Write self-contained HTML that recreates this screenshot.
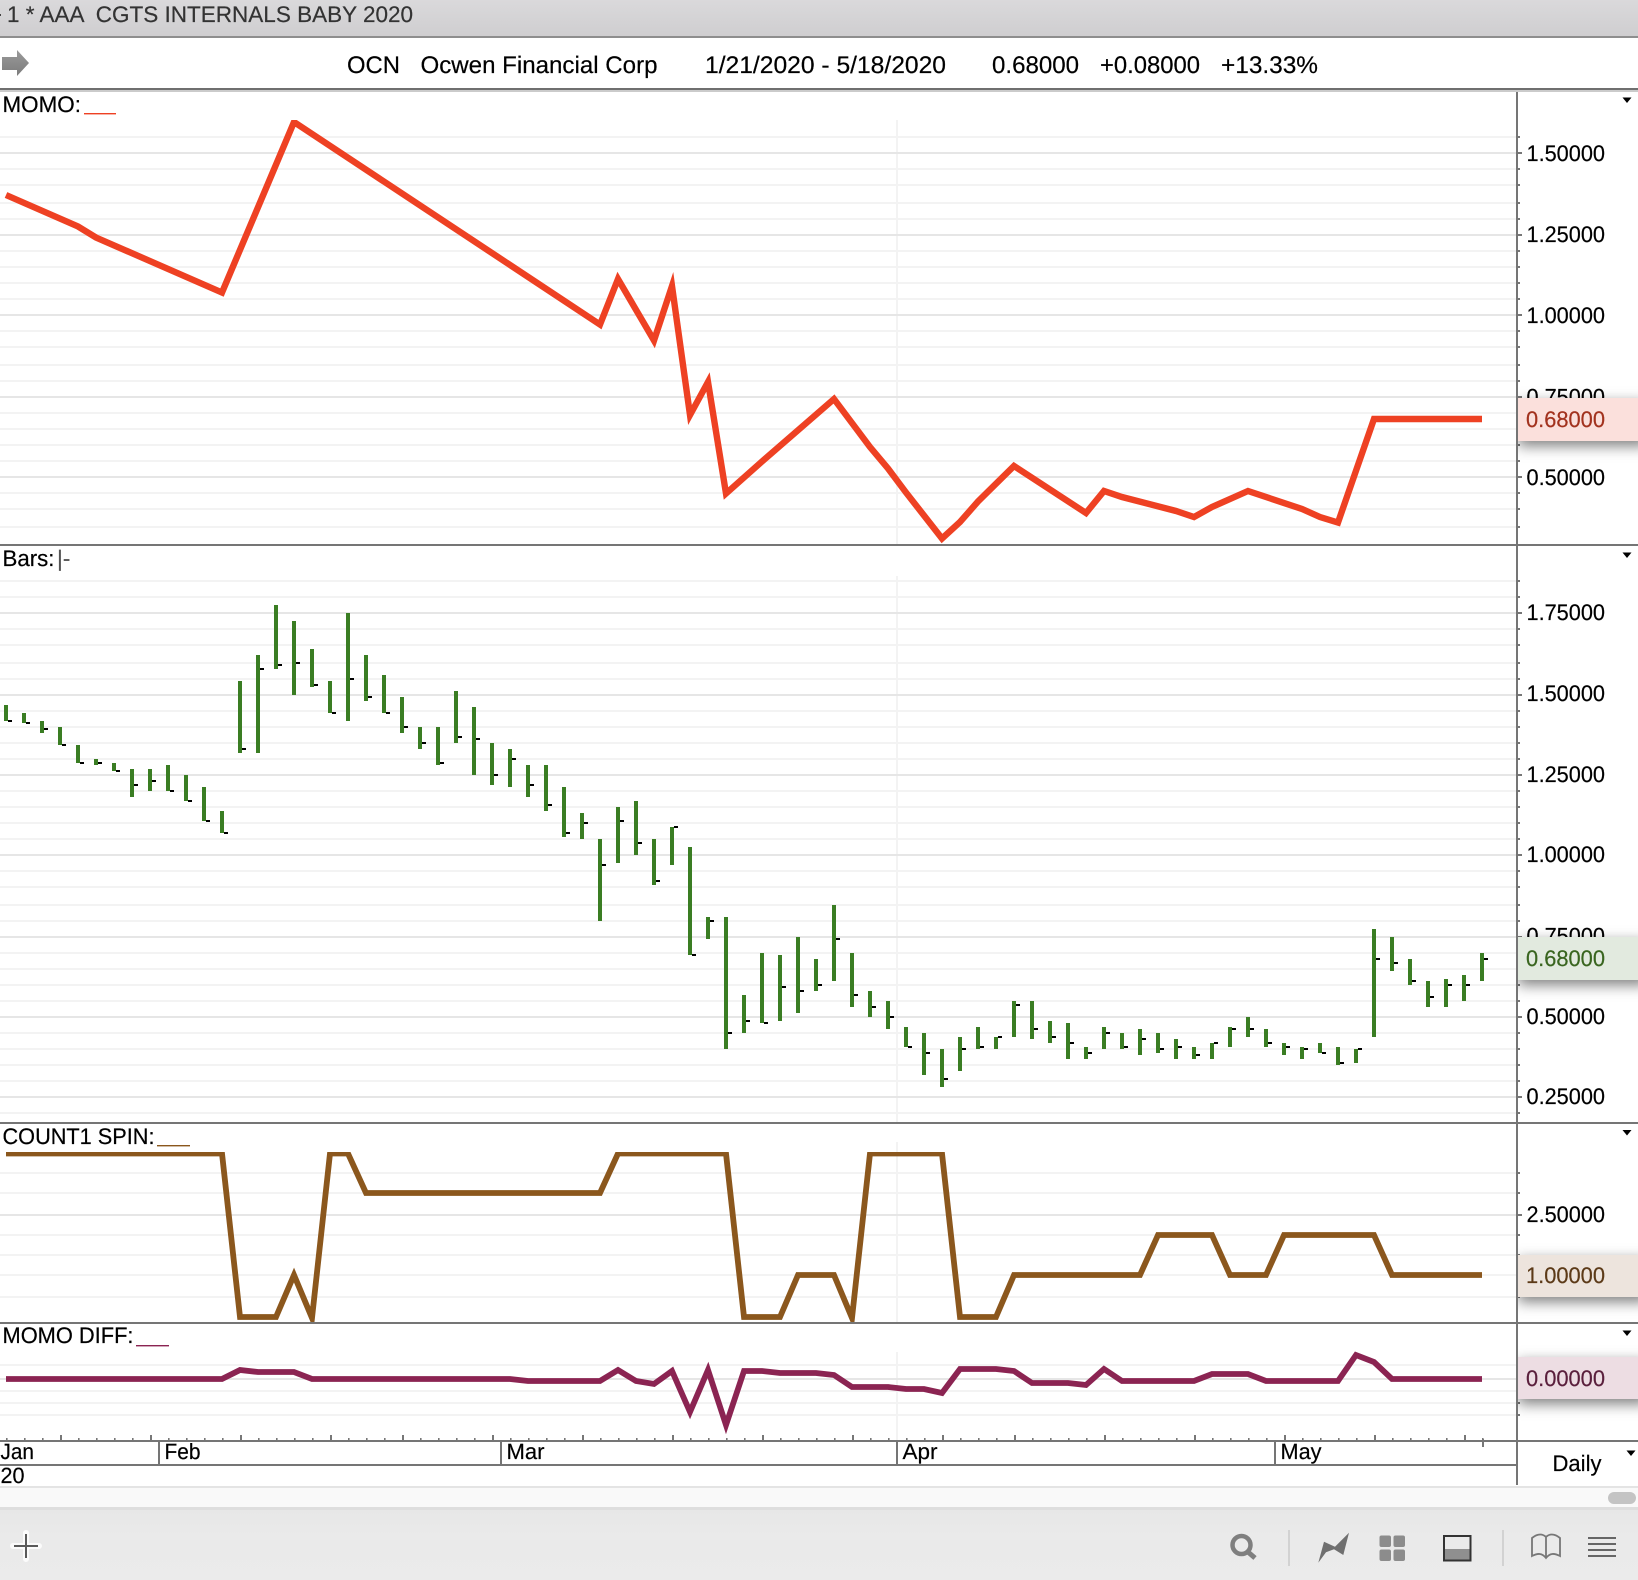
<!DOCTYPE html>
<html lang="en">
<head>
<meta charset="utf-8">
<title>OCN Chart</title>
<style>
html,body{margin:0;padding:0;background:#fff;width:1638px;height:1580px;overflow:hidden}
svg{display:block;position:absolute;left:0;top:0}
text{font-family:"Liberation Sans",sans-serif;fill:#000;stroke:#000;stroke-width:.2px;white-space:pre;text-rendering:geometricPrecision}
.t{font-size:22.5px}
.h{font-size:24px}
.d{font-size:22px}
</style>
</head>
<body>
<svg width="1638" height="1580" viewBox="0 0 1638 1580" xmlns="http://www.w3.org/2000/svg">
<defs>
<linearGradient id="tb" x1="0" y1="0" x2="0" y2="1"><stop offset="0" stop-color="#dad9db"/><stop offset="1" stop-color="#cfced0"/></linearGradient>
<linearGradient id="tool" x1="0" y1="0" x2="0" y2="1"><stop offset="0" stop-color="#e7e7e7"/><stop offset=".4" stop-color="#eaeaea"/><stop offset="1" stop-color="#ebebeb"/></linearGradient>
<linearGradient id="arw" x1="0" y1="0" x2="0" y2="1"><stop offset="0" stop-color="#9a9a9a"/><stop offset="1" stop-color="#7c7c7c"/></linearGradient>
<pattern id="tk" x="6" y="1438" width="18" height="2" patternUnits="userSpaceOnUse"><rect width="1.6" height="2" fill="#777"/></pattern>
<filter id="sh" x="-20%" y="-100%" width="140%" height="300%"><feDropShadow dx="0" dy="5" stdDeviation="7" flood-color="#000" flood-opacity=".5"/></filter>
<clipPath id="c1"><rect x="0" y="120" width="1516" height="424"/></clipPath>
<clipPath id="c3"><rect x="0" y="1152" width="1516" height="170"/></clipPath>
<clipPath id="c4"><rect x="0" y="1324" width="1516" height="116"/></clipPath>
<clipPath id="s1"><rect x="1518" y="92" width="120" height="452"/></clipPath>
<clipPath id="s2"><rect x="1518" y="546" width="120" height="576"/></clipPath>
<clipPath id="s3"><rect x="1518" y="1124" width="120" height="198"/></clipPath>
<clipPath id="s4"><rect x="1518" y="1324" width="120" height="116"/></clipPath>
</defs>

<!-- title + header -->
<rect x="0" y="0" width="1638" height="36" fill="url(#tb)"/>
<rect x="0" y="36" width="1638" height="2" fill="#8e8e8e"/>
<rect x="0" y="14" width="1" height="2" fill="#444"/>
<text x="7" y="22" font-size="22.5" textLength="406" lengthAdjust="spacingAndGlyphs" style="fill:#333;stroke:#333">1 * AAA  CGTS INTERNALS BABY 2020</text>
<polygon points="2,57 17,57 17,50 29,63 17,76 17,70 2,70" fill="url(#arw)"/>
<text class="h" x="347" y="73" textLength="53" lengthAdjust="spacingAndGlyphs">OCN</text>
<text class="h" x="420.5" y="73" textLength="237" lengthAdjust="spacingAndGlyphs">Ocwen Financial Corp</text>
<text class="h" x="705" y="73" textLength="241" lengthAdjust="spacingAndGlyphs">1/21/2020 - 5/18/2020</text>
<text class="h" x="992" y="73" textLength="87" lengthAdjust="spacingAndGlyphs">0.68000</text>
<text class="h" x="1100" y="73" textLength="100" lengthAdjust="spacingAndGlyphs">+0.08000</text>
<text class="h" x="1221" y="73" textLength="97" lengthAdjust="spacingAndGlyphs">+13.33%</text>
<rect x="0" y="88" width="1638" height="2" fill="#6f6f6f"/>
<rect x="0" y="90" width="1638" height="2" fill="#cbcbcb"/>

<!-- vertical grid -->
<g fill="#f3f3f3">
<rect x="896" y="120" width="2" height="424"/>
<rect x="896" y="576" width="2" height="546"/>
<rect x="896" y="1142" width="2" height="180"/>
<rect x="896" y="1352" width="2" height="88"/>
</g>

<!-- horizontal grid: minor -->
<path shape-rendering="crispEdges" stroke="#f3f3f3" stroke-width="2" fill="none" d="M0 137H1516M0 169H1516M0 185H1516M0 203H1516M0 219H1516M0 251H1516M0 267H1516M0 283H1516M0 299H1516M0 331H1516M0 347H1516M0 365H1516M0 381H1516M0 413H1516M0 429H1516M0 445H1516M0 461H1516M0 493H1516M0 509H1516M0 527H1516
M0 581H1516M0 597H1516M0 629H1516M0 645H1516M0 663H1516M0 679H1516M0 711H1516M0 727H1516M0 743H1516M0 759H1516M0 791H1516M0 807H1516M0 823H1516M0 839H1516M0 871H1516M0 887H1516M0 905H1516M0 921H1516M0 953H1516M0 969H1516M0 985H1516M0 1001H1516M0 1033H1516M0 1049H1516M0 1065H1516M0 1081H1516M0 1113H1516
M0 1173H1516M0 1193H1516M0 1235H1516M0 1255H1516M0 1275H1516M0 1297H1516
M0 1365H1516M0 1391H1516M0 1403H1516M0 1415H1516"/>
<!-- horizontal grid: major -->
<path shape-rendering="crispEdges" stroke="#e6e6e6" stroke-width="2" fill="none" d="M0 153H1516M0 235H1516M0 315H1516M0 397H1516M0 477H1516M0 613H1516M0 695H1516M0 775H1516M0 855H1516M0 937H1516M0 1017H1516M0 1097H1516M0 1215H1516M0 1379H1516"/>

<!-- axis ticks -->
<path shape-rendering="crispEdges" stroke="#777" stroke-width="2" fill="none" d="M1518 137h2M1518 169h2M1518 185h2M1518 203h2M1518 219h2M1518 251h2M1518 267h2M1518 283h2M1518 299h2M1518 331h2M1518 347h2M1518 365h2M1518 381h2M1518 413h2M1518 429h2M1518 445h2M1518 461h2M1518 493h2M1518 509h2M1518 527h2
M1518 581h2M1518 597h2M1518 629h2M1518 645h2M1518 663h2M1518 679h2M1518 711h2M1518 727h2M1518 743h2M1518 759h2M1518 791h2M1518 807h2M1518 823h2M1518 839h2M1518 871h2M1518 887h2M1518 905h2M1518 921h2M1518 953h2M1518 969h2M1518 985h2M1518 1001h2M1518 1033h2M1518 1049h2M1518 1065h2M1518 1081h2M1518 1113h2
M1518 1173h2M1518 1193h2M1518 1235h2M1518 1255h2M1518 1275h2M1518 1297h2M1518 1365h2M1518 1391h2M1518 1403h2M1518 1415h2
M1518 153h4M1518 235h4M1518 315h4M1518 397h4M1518 477h4M1518 613h4M1518 695h4M1518 775h4M1518 855h4M1518 937h4M1518 1017h4M1518 1097h4M1518 1215h4M1518 1379h4"/>

<!-- panel labels -->
<text class="t" x="2.5" y="112" textLength="78.5" lengthAdjust="spacingAndGlyphs">MOMO:</text>
<rect x="84" y="113" width="32" height="1.4" fill="#ee4123"/>
<text class="t" x="2.5" y="566" textLength="52" lengthAdjust="spacingAndGlyphs">Bars:</text>
<text class="t" x="57" y="566" style="fill:#555;stroke:#555">|-</text>
<text class="t" x="2.5" y="1144" textLength="152" lengthAdjust="spacingAndGlyphs">COUNT1 SPIN:</text>
<rect x="157" y="1145" width="33" height="1.4" fill="#8b571d"/>
<text class="t" x="2.5" y="1343" textLength="131" lengthAdjust="spacingAndGlyphs">MOMO DIFF:</text>
<rect x="136" y="1345" width="33" height="1.4" fill="#8b2452"/>

<!-- MOMO line -->
<polyline clip-path="url(#c1)" fill="none" stroke="#ee4123" stroke-width="6.4" stroke-linejoin="miter" stroke-miterlimit="12" points="6,195 78,226.5 96,237.5 222,292.5 294,122 600,324.5 618,279 654,340.5 672,286 690,415 708,382 726,493.5 762,461.5 834,399 870,447 888,468.5 906,492.5 942,538.5 960,522 978,501.5 1014,466 1086,513 1104,491 1122,497 1176,511 1194,517 1212,507 1248,491 1302,509 1320,517 1338,522.5 1374,419 1482,419"/>

<!-- Bars: green stems -->
<path shape-rendering="crispEdges" fill="#3a7d23" d="M4 705h4v16h-4zM22 713h4v10h-4zM40 721h4v12h-4zM58 727h4v18h-4zM76 745h4v18h-4zM94 759h4v6h-4zM112 763h4v8h-4zM130 769h4v28h-4zM148 769h4v22h-4zM166 765h4v26h-4zM184 775h4v26h-4zM202 787h4v34h-4zM220 811h4v22h-4zM238 681h4v72h-4zM256 655h4v98h-4zM274 605h4v64h-4zM292 621h4v74h-4zM310 649h4v38h-4zM328 681h4v32h-4zM346 613h4v108h-4zM364 655h4v46h-4zM382 675h4v38h-4zM400 697h4v36h-4zM418 727h4v22h-4zM436 727h4v38h-4zM454 691h4v52h-4zM472 707h4v68h-4zM490 743h4v42h-4zM508 749h4v38h-4zM526 765h4v32h-4zM544 765h4v46h-4zM562 787h4v50h-4zM580 813h4v26h-4zM598 839h4v82h-4zM616 807h4v56h-4zM634 801h4v54h-4zM652 839h4v46h-4zM670 827h4v38h-4zM688 847h4v108h-4zM706 917h4v22h-4zM724 917h4v132h-4zM742 995h4v38h-4zM760 953h4v70h-4zM778 955h4v66h-4zM796 937h4v76h-4zM814 959h4v32h-4zM832 905h4v76h-4zM850 953h4v54h-4zM868 991h4v26h-4zM886 1001h4v28h-4zM904 1027h4v20h-4zM922 1033h4v42h-4zM940 1049h4v38h-4zM958 1037h4v34h-4zM976 1027h4v22h-4zM994 1037h4v12h-4zM1012 1001h4v36h-4zM1030 1001h4v38h-4zM1048 1021h4v22h-4zM1066 1023h4v36h-4zM1084 1047h4v12h-4zM1102 1027h4v22h-4zM1120 1033h4v16h-4zM1138 1029h4v26h-4zM1156 1033h4v20h-4zM1174 1039h4v20h-4zM1192 1047h4v12h-4zM1210 1043h4v16h-4zM1228 1027h4v20h-4zM1246 1017h4v20h-4zM1264 1029h4v18h-4zM1282 1043h4v12h-4zM1300 1047h4v12h-4zM1318 1043h4v10h-4zM1336 1047h4v18h-4zM1354 1049h4v14h-4zM1372 929h4v108h-4zM1390 937h4v34h-4zM1408 959h4v26h-4zM1426 981h4v26h-4zM1444 979h4v28h-4zM1462 975h4v26h-4zM1480 953h4v28h-4z"/>
<!-- Bars: black close ticks -->
<path shape-rendering="crispEdges" fill="#000" d="M8 720h4v2h-4zM26 722h4v2h-4zM44 728h4v2h-4zM62 744h4v2h-4zM80 762h4v2h-4zM98 762h4v2h-4zM116 770h4v2h-4zM134 784h4v2h-4zM152 780h4v2h-4zM170 790h4v2h-4zM188 800h4v2h-4zM206 820h4v2h-4zM224 832h4v2h-4zM242 748h4v2h-4zM260 668h4v2h-4zM278 664h4v2h-4zM296 662h4v2h-4zM314 684h4v2h-4zM332 712h4v2h-4zM350 678h4v2h-4zM368 696h4v2h-4zM386 712h4v2h-4zM404 726h4v2h-4zM422 742h4v2h-4zM440 762h4v2h-4zM458 736h4v2h-4zM476 738h4v2h-4zM494 774h4v2h-4zM512 758h4v2h-4zM530 784h4v2h-4zM548 804h4v2h-4zM566 832h4v2h-4zM584 822h4v2h-4zM602 864h4v2h-4zM620 820h4v2h-4zM638 842h4v2h-4zM656 880h4v2h-4zM674 826h4v2h-4zM692 954h4v2h-4zM710 920h4v2h-4zM728 1032h4v2h-4zM746 1020h4v2h-4zM764 1022h4v2h-4zM782 986h4v2h-4zM800 990h4v2h-4zM818 984h4v2h-4zM836 938h4v2h-4zM854 994h4v2h-4zM872 1006h4v2h-4zM890 1016h4v2h-4zM908 1046h4v2h-4zM926 1052h4v2h-4zM944 1078h4v2h-4zM962 1048h4v2h-4zM980 1046h4v2h-4zM998 1036h4v2h-4zM1016 1004h4v2h-4zM1034 1028h4v2h-4zM1052 1036h4v2h-4zM1070 1042h4v2h-4zM1088 1052h4v2h-4zM1106 1032h4v2h-4zM1124 1046h4v2h-4zM1142 1038h4v2h-4zM1160 1048h4v2h-4zM1178 1046h4v2h-4zM1196 1054h4v2h-4zM1214 1042h4v2h-4zM1232 1028h4v2h-4zM1250 1028h4v2h-4zM1268 1042h4v2h-4zM1286 1046h4v2h-4zM1304 1048h4v2h-4zM1322 1052h4v2h-4zM1340 1062h4v2h-4zM1358 1048h4v2h-4zM1376 958h4v2h-4zM1394 962h4v2h-4zM1412 980h4v2h-4zM1430 996h4v2h-4zM1448 984h4v2h-4zM1466 984h4v2h-4zM1484 958h4v2h-4z"/>

<!-- COUNT1 SPIN line -->
<polyline clip-path="url(#c3)" fill="none" stroke="#8b571d" stroke-width="5.8" stroke-linejoin="miter" stroke-miterlimit="12" points="6,1153.5 222,1153.5 240,1317 276,1317 294,1275 312,1318 330,1153.5 348,1153.5 366,1193 600,1193 618,1153.5 726,1153.5 744,1317 780,1317 798,1275 834,1275 852,1318 870,1153.5 942,1153.5 960,1317 996,1317 1014,1275 1140,1275 1158,1235 1212,1235 1230,1275 1266,1275 1284,1235 1374,1235 1392,1275 1482,1275"/>

<!-- MOMO DIFF line -->
<polyline clip-path="url(#c4)" fill="none" stroke="#8b2452" stroke-width="5.8" stroke-linejoin="miter" stroke-miterlimit="12" points="6,1379 222,1379 240,1370 258,1372 294,1372 312,1379 510,1379 528,1381 600,1381 618,1370 636,1381 654,1384 672,1371 690,1412 708,1370 726,1425 744,1371 762,1371 780,1373 816,1373 834,1375 852,1387 888,1387 906,1389 924,1389 942,1393 960,1369 996,1369 1014,1371 1032,1383 1068,1383 1086,1385 1104,1369 1122,1381 1194,1381 1212,1374 1248,1374 1266,1381 1338,1381 1356,1355 1374,1362 1392,1379 1482,1379"/>

<!-- axis labels -->
<text class="t" x="1526.5" y="161" textLength="78.5" lengthAdjust="spacingAndGlyphs">1.50000</text>
<text class="t" x="1526.5" y="242" textLength="78.5" lengthAdjust="spacingAndGlyphs">1.25000</text>
<text class="t" x="1526.5" y="323" textLength="78.5" lengthAdjust="spacingAndGlyphs">1.00000</text>
<text class="t" x="1526.5" y="404.5" textLength="78.5" lengthAdjust="spacingAndGlyphs">0.75000</text>
<text class="t" x="1526.5" y="485" textLength="78.5" lengthAdjust="spacingAndGlyphs">0.50000</text>
<text class="t" x="1526.5" y="620" textLength="78.5" lengthAdjust="spacingAndGlyphs">1.75000</text>
<text class="t" x="1526.5" y="701" textLength="78.5" lengthAdjust="spacingAndGlyphs">1.50000</text>
<text class="t" x="1526.5" y="782" textLength="78.5" lengthAdjust="spacingAndGlyphs">1.25000</text>
<text class="t" x="1526.5" y="862" textLength="78.5" lengthAdjust="spacingAndGlyphs">1.00000</text>
<text class="t" x="1526.5" y="943.5" textLength="78.5" lengthAdjust="spacingAndGlyphs">0.75000</text>
<text class="t" x="1526.5" y="1024" textLength="78.5" lengthAdjust="spacingAndGlyphs">0.50000</text>
<text class="t" x="1526.5" y="1104" textLength="78.5" lengthAdjust="spacingAndGlyphs">0.25000</text>
<text class="t" x="1526.5" y="1222" textLength="78.5" lengthAdjust="spacingAndGlyphs">2.50000</text>

<!-- last value boxes -->
<g clip-path="url(#s1)"><rect x="1518" y="398" width="130" height="43" fill="#fbe0dc" filter="url(#sh)"/></g>
<g clip-path="url(#s2)"><rect x="1518" y="937" width="130" height="43" fill="#e2eadf" filter="url(#sh)"/></g>
<g clip-path="url(#s3)"><rect x="1518" y="1255" width="130" height="42" fill="#ede4dd" filter="url(#sh)"/></g>
<g clip-path="url(#s4)"><rect x="1518" y="1357" width="130" height="42" fill="#eddde3" filter="url(#sh)"/></g>
<text class="t" x="1526" y="427" textLength="79" lengthAdjust="spacingAndGlyphs" style="fill:#a2321e;stroke:#a2321e">0.68000</text>
<text class="t" x="1526" y="966" textLength="79" lengthAdjust="spacingAndGlyphs" style="fill:#39651f;stroke:#39651f">0.68000</text>
<text class="t" x="1526" y="1283" textLength="79" lengthAdjust="spacingAndGlyphs" style="fill:#5c3a18;stroke:#5c3a18">1.00000</text>
<text class="t" x="1526" y="1386" textLength="79" lengthAdjust="spacingAndGlyphs" style="fill:#5a1f3c;stroke:#5a1f3c">0.00000</text>

<!-- dividers and axis -->
<g fill="#757575" shape-rendering="crispEdges">
<rect x="0" y="544" width="1638" height="2"/>
<rect x="0" y="1122" width="1638" height="2"/>
<rect x="0" y="1322" width="1638" height="2"/>
<rect x="0" y="1440" width="1638" height="2"/>
<rect x="0" y="1464" width="1516" height="2"/>
<rect x="1516" y="92" width="2" height="1393"/>
<rect x="158" y="1442" width="2" height="22"/>
<rect x="500" y="1442" width="2" height="22"/>
<rect x="896" y="1442" width="2" height="22"/>
<rect x="1274" y="1442" width="2" height="22"/>
</g>

<!-- dropdown triangles -->
<g fill="#000">
<polygon points="1622.5,97.5 1631.5,97.5 1627,103"/>
<polygon points="1622.5,552.5 1631.5,552.5 1627,558"/>
<polygon points="1622.5,1130 1631.5,1130 1627,1135.5"/>
<polygon points="1622.5,1330.5 1631.5,1330.5 1627,1336"/>
<polygon points="1626.5,1450.5 1635.5,1450.5 1631,1456"/>
</g>

<!-- date axis -->
<rect x="6" y="1438" width="1478" height="2" fill="url(#tk)"/>
<path shape-rendering="crispEdges" stroke="#777" stroke-width="2" fill="none" d="M61 1435v5M151 1435v5M241 1435v5M331 1435v5M403 1435v5M493 1435v5M583 1435v5M673 1435v5M763 1435v5M853 1435v5M943 1435v5M1015 1435v5M1105 1435v5M1195 1435v5M1285 1435v5M1375 1435v5M1465 1435v5M1483 1439v8"/>
<text class="d" x="0.5" y="1459" textLength="33.5" lengthAdjust="spacingAndGlyphs">Jan</text>
<text class="d" x="164.5" y="1459" textLength="36" lengthAdjust="spacingAndGlyphs">Feb</text>
<text class="d" x="506.5" y="1459" textLength="38" lengthAdjust="spacingAndGlyphs">Mar</text>
<text class="d" x="902.5" y="1459" textLength="35" lengthAdjust="spacingAndGlyphs">Apr</text>
<text class="d" x="1280.5" y="1459" textLength="41" lengthAdjust="spacingAndGlyphs">May</text>
<text class="d" x="0.5" y="1483" textLength="24" lengthAdjust="spacingAndGlyphs">20</text>
<text class="t" x="1552.5" y="1471" textLength="49" lengthAdjust="spacingAndGlyphs">Daily</text>

<!-- scroll strip + toolbar -->
<rect x="0" y="1486" width="1638" height="2" fill="#e4e4e4"/>
<rect x="0" y="1488" width="1638" height="19" fill="#f9f9f9"/>
<rect x="0" y="1507" width="1638" height="3" fill="#dedede"/>
<rect x="0" y="1510" width="1638" height="70" fill="url(#tool)"/>
<rect x="1608" y="1492" width="28" height="12" rx="6" fill="#c4c4c4"/>

<!-- plus -->
<path d="M26 1533V1559M13 1546H39" stroke="#fbfbfb" stroke-width="6" stroke-linecap="round" fill="none"/>
<path d="M26 1534V1558M14 1546H38" stroke="#5a5a5a" stroke-width="2" fill="none"/>
<!-- magnifier -->
<circle cx="1241.5" cy="1545" r="9" fill="none" stroke="#7f7f7f" stroke-width="4.5"/>
<path d="M1248 1552L1255 1558" stroke="#7f7f7f" stroke-width="5" fill="none"/>
<!-- separators -->
<rect x="1288" y="1530" width="2" height="36" fill="#d2d2d2"/>
<rect x="1502" y="1530" width="2" height="36" fill="#d2d2d2"/>
<!-- lightning chart -->
<polygon points="1318.3,1562.7 1324,1541.7 1335,1546.7 1349,1532.7 1343.3,1555 1334,1549.3 1326,1552.3" fill="#6f6f6f"/>
<!-- grid -->
<g fill="#8c8c8c">
<rect x="1379.5" y="1535.5" width="11.5" height="11.5" rx="2"/>
<rect x="1393.5" y="1535.5" width="11.5" height="11.5" rx="2"/>
<rect x="1379.5" y="1549.5" width="11.5" height="11.5" rx="2"/>
<rect x="1393.5" y="1549.5" width="11.5" height="11.5" rx="2"/>
</g>
<!-- panel icon -->
<rect x="1444" y="1549" width="26" height="11" fill="#8f8f8f"/>
<rect x="1444" y="1536" width="26.5" height="24.5" fill="none" stroke="#333" stroke-width="2"/>
<!-- book -->
<path d="M1532 1538C1538 1533 1543 1534 1546 1537C1549 1534 1554 1533 1560 1538V1556C1554 1553 1550 1553 1546 1558C1542 1553 1538 1553 1532 1556ZM1546 1537V1558" fill="none" stroke="#777" stroke-width="1.8"/>
<!-- list -->
<path d="M1588 1538H1616M1588 1544H1616M1588 1550H1616M1588 1556H1616" fill="none" stroke="#666" stroke-width="2"/>
</svg>
</body>
</html>
